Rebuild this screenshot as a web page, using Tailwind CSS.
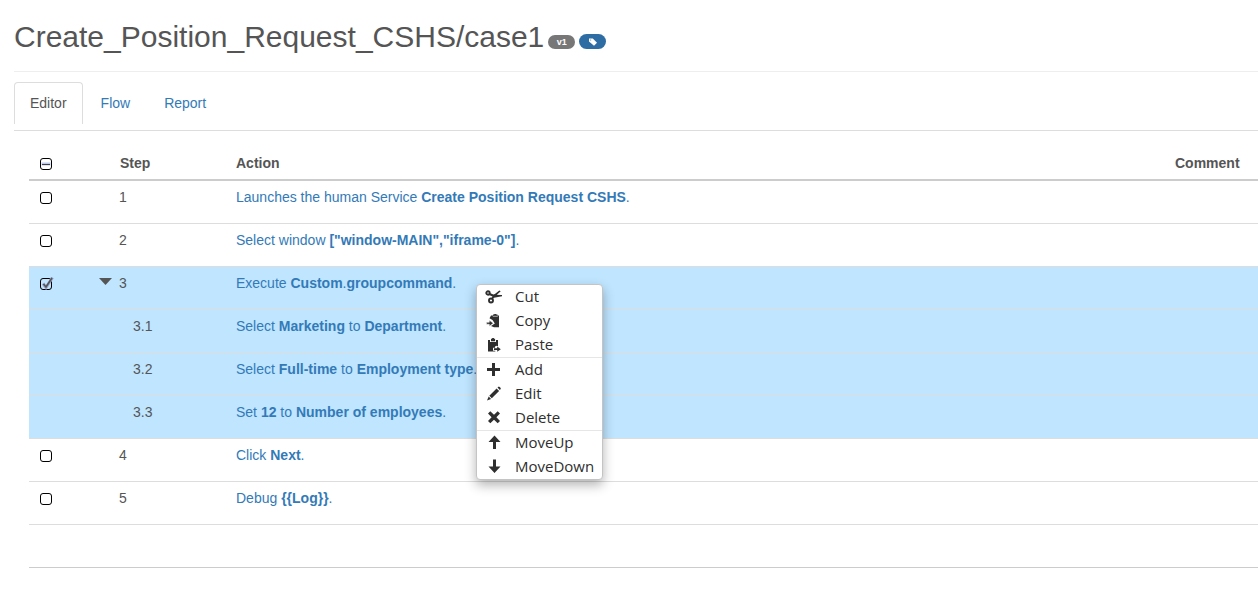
<!DOCTYPE html>
<html lang="en">
<head>
<meta charset="utf-8">
<title>Create_Position_Request_CSHS/case1</title>
<script src="https://cdn.jsdelivr.net/npm/@tailwindcss/browser@4"></script>
</head>
<body class="bg-white font-['Liberation_Sans',Arial,sans-serif] text-sm leading-5 text-[#555]">
<main class="relative pl-3.5">
  <header class="flex items-center gap-1 border-b border-[#eee] pt-[19px] pb-[17px]">
    <h1 class="text-[30px] leading-[35px]">Create_Position_Request_CSHS/case1</h1>
    <span class="mt-2.5 flex h-3.5 w-[27px] items-center justify-center rounded-full bg-[#777] text-[9px] font-bold text-white">v1</span>
    <button type="button" aria-label="Tags" class="mt-2.5 flex h-[15px] w-[27px] items-center justify-center rounded-full bg-[#2e6da4] text-white">
      <svg class="h-2 w-2" viewBox="0 0 8 8" fill="currentColor"><path fill-rule="evenodd" d="M0 .5h3.8L8 4.7 5 7.7.0 3.500zM1.700 1.400a.5.5 0 1 0 0 1 .5.5 0 0 0 0-1z"/></svg>
    </button>
  </header>

  <nav class="mt-2.5 flex gap-0.5 border-b border-[#ddd] pb-1.5">
    <a href="#editor" aria-current="page" class="rounded-t border border-b-0 border-[#ddd] px-[15px] pt-2.5 pb-[11px]">Editor</a>
    <a href="#flow" class="border border-b-0 border-transparent px-[15px] pt-2.5 pb-[11px] text-[#337ab7]">Flow</a>
    <a href="#report" class="border border-b-0 border-transparent px-[15px] pt-2.5 pb-[11px] text-[#337ab7]">Report</a>
  </nav>

  <section class="mt-3.5 pl-[15px]">
    <table class="w-full table-fixed border-separate border-spacing-0 text-left">
      <colgroup><col class="w-[83px]"><col class="w-[116px]"><col><col class="w-[91px]"></colgroup>
      <thead>
        <tr class="h-9 align-top [&>th]:border-b-2 [&>th]:border-[#ccc] [&>th]:px-2 [&>th]:pt-2">
          <th><span class="relative ml-[3px] mt-[5px] block h-3 w-3"><input type="checkbox" aria-label="Select all steps" class="block h-3 w-3 appearance-none rounded-[3px] border border-black bg-white"><svg class="pointer-events-none absolute top-0 left-0 h-3 w-3" viewBox="0 0 12 12"><path d="M1.500 6h9" stroke="#b9c8ec" stroke-width="3"/><path d="M2 6.500h8" stroke="#444" stroke-width="1"/></svg></span></th>
          <th>Step</th><th>Action</th><th>Comment</th>
        </tr>
      </thead>
      <tbody class="[&>tr]:h-[43px] [&>tr]:align-top [&_td]:border-b [&_td]:border-[#ddd] [&_td]:px-2 [&_td]:pt-1.5 [&_td:nth-child(2)]:pl-[7px]">
        <tr><td><input type="checkbox" aria-label="Select step 1" class="mt-[5px] ml-[3px] block h-3 w-3 appearance-none rounded-[3px] border border-black bg-white"></td><td>1</td><td><a href="#s1" class="text-[#337ab7]">Launches the human Service <b>Create Position Request CSHS</b>.</a></td><td></td></tr>
        <tr><td><input type="checkbox" aria-label="Select step 2" class="mt-[5px] ml-[3px] block h-3 w-3 appearance-none rounded-[3px] border border-black bg-white"></td><td>2</td><td><a href="#s2" class="text-[#337ab7]">Select window <b>["window-MAIN","iframe-0"]</b>.</a></td><td></td></tr>
        <tr class="bg-[#bfe5ff]"><td><span class="relative ml-[3px] mt-[5px] block h-3 w-3"><input type="checkbox" checked aria-label="Select step 3" class="block h-3 w-3 appearance-none rounded-[3px] border border-black"><svg class="pointer-events-none absolute -top-px left-0 h-[13px] w-[14px]" viewBox="0 0 14 13" fill="none"><path d="M3 6.500l3 4L12.500.500" stroke="#9aa5cf" stroke-width="3"/><path d="M3.500 7l2.500 3L12 1" stroke="#555" stroke-width="1.600"/></svg></span></td><td class="relative"><button type="button" aria-label="Collapse step 3" class="absolute top-[11px] -left-[13px]"><svg class="block h-[7px] w-[13px]" viewBox="0 0 13 7"><path d="M0 0h13L6.500 7z" fill="#555"/></svg></button>3</td><td><a href="#s3" class="text-[#337ab7]">Execute <b>Custom</b>.<b>groupcommand</b>.</a></td><td></td></tr>
        <tr class="bg-[#bfe5ff]"><td></td><td><span class="pl-3.5">3.1</span></td><td><a href="#s31" class="text-[#337ab7]">Select <b>Marketing</b> to <b>Department</b>.</a></td><td></td></tr>
        <tr class="bg-[#bfe5ff]"><td></td><td><span class="pl-3.5">3.2</span></td><td><a href="#s32" class="text-[#337ab7]">Select <b>Full-time</b> to <b>Employment type</b>.</a></td><td></td></tr>
        <tr class="bg-[#bfe5ff]"><td></td><td><span class="pl-3.5">3.3</span></td><td><a href="#s33" class="text-[#337ab7]">Set <b>12</b> to <b>Number of employees</b>.</a></td><td></td></tr>
        <tr><td><input type="checkbox" aria-label="Select step 4" class="mt-[5px] ml-[3px] block h-3 w-3 appearance-none rounded-[3px] border border-black bg-white"></td><td>4</td><td><a href="#s4" class="text-[#337ab7]">Click <b>Next</b>.</a></td><td></td></tr>
        <tr><td><input type="checkbox" aria-label="Select step 5" class="mt-[5px] ml-[3px] block h-3 w-3 appearance-none rounded-[3px] border border-black bg-white"></td><td>5</td><td><a href="#s5" class="text-[#337ab7]">Debug <b>{{Log}}</b>.</a></td><td></td></tr>
        <tr class="[&>td]:border-[#ccc]!"><td></td><td></td><td></td><td></td></tr>
      </tbody>
    </table>
  </section>

  <!-- Context menu -->
  <div role="menu" class="absolute top-[284px] left-[476px] w-[127px] rounded border border-[#c4c4c4] bg-white font-['Open_Sans','Noto_Sans',sans-serif] text-[15px] leading-[22px] text-[#2f2f2f] shadow-[0_5px_12px_rgba(0,0,0,0.3)] [&_button]:flex [&_button]:h-6 [&_button]:w-full [&_button]:items-center [&_button]:gap-[13px] [&_button]:pb-0.5 [&_button]:pl-2 [&_svg]:mt-0.5 [&_svg]:h-4 [&_svg]:w-[17px]">
    <button type="button" role="menuitem"><svg viewBox="0 0 17 16" fill="none" stroke="currentColor"><circle cx="3" cy="4" r="1.700" stroke-width="1.900"/><circle cx="6" cy="11.500" r="2" stroke-width="1.900"/><path d="M4.500 5l4.500 2" stroke-width="2.300"/><path d="M6 10L8 6.500 14.300 1.500l1.400.8L10 7.500 7.500 10.500zM7.500 5.700L17 5.900v1.300L9 8.700z" fill="currentColor" stroke="none"/></svg>Cut</button>
    <button type="button" role="menuitem"><svg viewBox="0 0 17 16" fill="currentColor"><path d="M8 2.500V1.500h1L9.500 1h1.500l.5.500h1v1h1.500v11.800H9l-3-1.300 3.800-2.600L7.500 7 4.500 5.200 6 2.500z"/><path d="M7.800 3.300h5" stroke="#fff" stroke-width=".6"/><path d="M1.500 9.300h2.800V7.200L8.300 10.200 4.300 13.200v-2H1.500z" stroke="#fff" stroke-width=".5"/></svg>Copy</button>
    <button type="button" role="menuitem"><svg viewBox="0 0 17 16" fill="currentColor"><path d="M3 3h2v2h6V3h2v6.300l-1.500-.5-1.500.8V10.700H8v3h2.300V14.500H3z"/><path d="M6 1.800h1L7.300 1h1.500l.3.800h1V4.200H6z"/><path d="M9 11.300h3.200V9.500l3.600 2.700-3.600 2.600v-1.700H9z"/></svg>Paste</button>
    <hr class="border-[#e6e6e6]">
    <button type="button" role="menuitem"><svg viewBox="0 0 17 16" fill="currentColor"><path d="M7 1h3v5h5v3h-5v5H7V9H2V6h5z"/></svg>Add</button>
    <button type="button" role="menuitem"><svg viewBox="0 0 17 16" fill="currentColor"><path d="M12.500 1.600l.7-.7a1 1 0 0 1 1.400 0l.9.900a1 1 0 0 1 0 1.400l-.7.700zM11.600 2.500l2.500 2.500L6.800 12.300 4.300 9.800zM3.700 10.500l2.400 2.400L2 14.500z"/></svg>Edit</button>
    <button type="button" role="menuitem"><svg viewBox="0 0 17 16" fill="currentColor"><path d="M5.300 1.300L9 4.800l3.700-3.500L15 3.600 11.400 7.300 15 11l-2.300 2.300L9 9.800l-3.700 3.500L3 11l3.600-3.700L3 3.600z"/></svg>Delete</button>
    <hr class="border-[#e6e6e6]">
    <button type="button" role="menuitem"><svg viewBox="0 0 17 16" fill="currentColor"><path d="M9.500.5L15.500 7H11v7H8V7H3.500z"/></svg>MoveUp</button>
    <button type="button" role="menuitem"><svg viewBox="0 0 17 16" fill="currentColor"><path d="M8 .5h3V7.500h4.500l-6 6.500-6-6.500H8z"/></svg>MoveDown</button>
  </div>
</main>
</body>
</html>
